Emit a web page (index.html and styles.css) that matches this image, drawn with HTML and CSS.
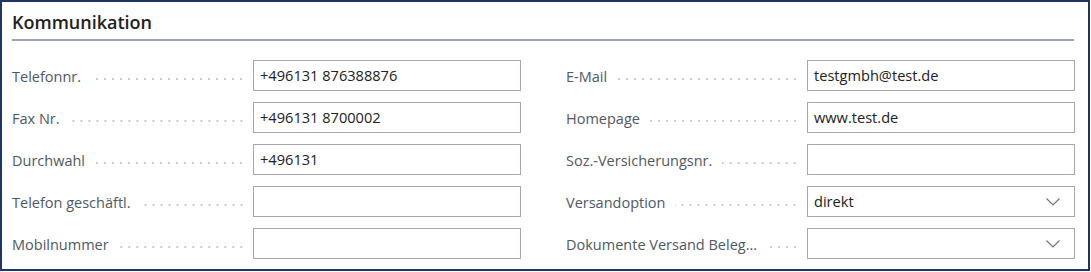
FILE: index.html
```html
<!DOCTYPE html>
<html lang="de">

<head>
    <meta charset="UTF-8">
    <title>Kommunikation</title>
    <link rel="stylesheet" href="styles.css">
</head>

<body>

    <div class="frame">
        <h2 class="section-title">Kommunikation</h2>

        <div class="fields">
            <div class="col">
                <div class="field">
                    <span class="label">Telefonnr.</span><span class="dots"></span>
                    <div class="input">+496131 876388876</div>
                </div>
                <div class="field">
                    <span class="label">Fax Nr.</span><span class="dots"></span>
                    <div class="input">+496131 8700002</div>
                </div>
                <div class="field">
                    <span class="label">Durchwahl</span><span class="dots"></span>
                    <div class="input">+496131</div>
                </div>
                <div class="field">
                    <span class="label">Telefon geschäftl.</span><span class="dots"></span>
                    <div class="input"></div>
                </div>
                <div class="field">
                    <span class="label">Mobilnummer</span><span class="dots"></span>
                    <div class="input"></div>
                </div>
            </div>

            <div class="col">
                <div class="field">
                    <span class="label">E-Mail</span><span class="dots"></span>
                    <div class="input">testgmbh@test.de</div>
                </div>
                <div class="field">
                    <span class="label">Homepage</span><span class="dots"></span>
                    <div class="input">www.test.de</div>
                </div>
                <div class="field">
                    <span class="label">Soz.-Versicherungsnr.</span><span class="dots"></span>
                    <div class="input"></div>
                </div>
                <div class="field">
                    <span class="label">Versandoption</span><span class="dots"></span>
                    <div class="input select">
                        <span>direkt</span>
                        <svg class="chevron" width="14" height="8" viewBox="0 0 14 8"><path d="M0.5 0.5 L7 7 L13.5 0.5" fill="none" stroke="#707070" stroke-width="1.1"/></svg>
                    </div>
                </div>
                <div class="field">
                    <span class="label">Dokumente Versand Beleg...</span><span class="dots"></span>
                    <div class="input select">
                        <span></span>
                        <svg class="chevron" width="14" height="8" viewBox="0 0 14 8"><path d="M0.5 0.5 L7 7 L13.5 0.5" fill="none" stroke="#707070" stroke-width="1.1"/></svg>
                    </div>
                </div>
            </div>
        </div>
    </div>

</body>

</html>
```

FILE: styles.css
```css
* {
    box-sizing: border-box;
}

body {
    margin: 0;
    padding: 0;
    background-color: #fff;
    font-family: 'Open Sans', 'Noto Sans', sans-serif;
}

.frame {
    width: 1090px;
    height: 271px;
    margin: 0;
    border: 2px solid #1f3566;
    padding: 0 14px 0 10px;
}

.section-title {
    margin: 0;
    padding-top: 8px;
    height: 39px;
    font-size: 18px;
    font-weight: 600;
    color: #212121;
    border-bottom: 2px solid #9ea4ab;
    line-height: 24px;
}

.fields {
    display: grid;
    grid-template-columns: 509px 509px;
    column-gap: 45px;
    padding-top: 19px;
}

.field {
    display: flex;
    align-items: center;
    height: 31px;
    margin-bottom: 11px;
}

.label {
    font-size: 14.5px;
    color: #505862;
    white-space: nowrap;
    padding-top: 2px;
}

.dots {
    flex: 1;
    height: 2px;
    margin: 6px 8px 0 10px;
    background-image: radial-gradient(circle, #cccccc 0.8px, transparent 1px);
    background-size: 8px 2px;
    background-repeat: repeat-x;
    background-position: right;
}

.input {
    width: 268px;
    height: 31px;
    flex-shrink: 0;
    border: 1px solid #a3a8b0;
    padding: 0 6px;
    font-size: 14.6px;
    color: #212121;
    line-height: 29px;
}

.select {
    display: flex;
    justify-content: space-between;
    align-items: center;
}

.chevron {
    margin-right: 8px;
}
```
